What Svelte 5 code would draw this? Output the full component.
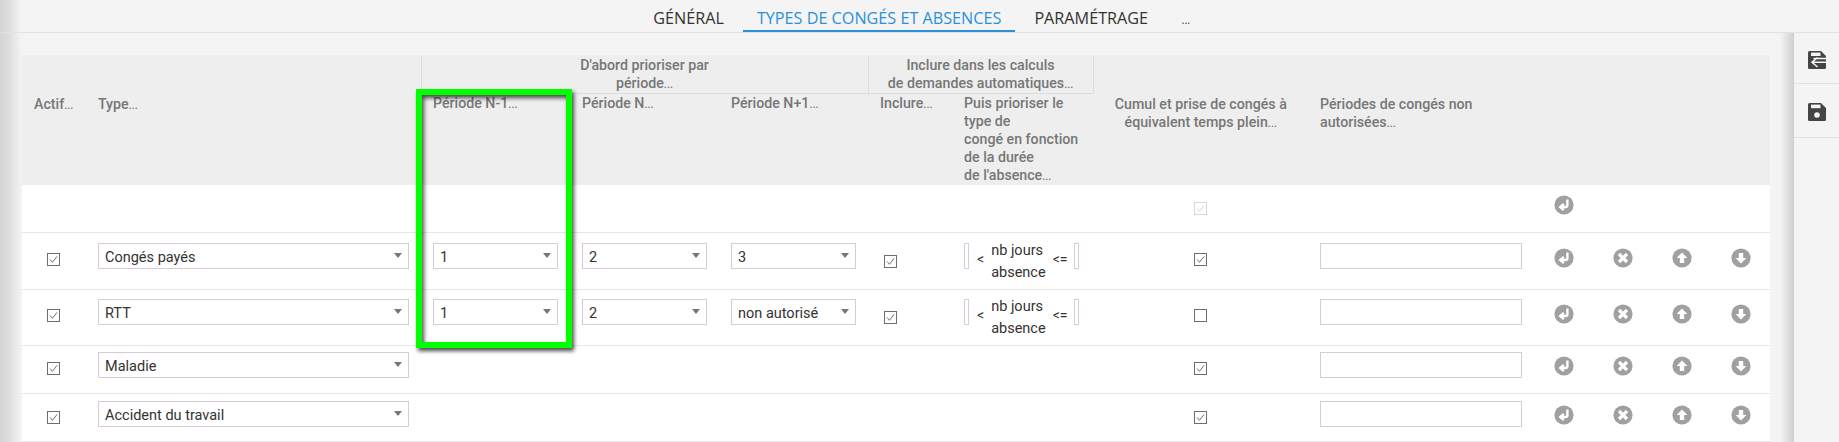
<script>
  const tabs = ["GÉNÉRAL", "TYPES DE CONGÉS ET ABSENCES", "PARAMÉTRAGE"];
  const rows = [
    { type: "Congés payés", periods: ["1", "2", "3"], cumul: true, cls: "r1" },
    { type: "RTT", periods: ["1", "2", "non autorisé"], cumul: false, cls: "r2" },
    { type: "Maladie", cumul: true, cls: "r3" },
    { type: "Accident du travail", cumul: true, cls: "r4" },
  ];
</script>

{#snippet check(on, cls = "")}
  <span class="check {cls}">
    {#if on}
      <svg viewBox="0 0 13 13" width="11" height="11"><path d="M2.5 6.5 L5.2 9.8 L10.8 2.8" fill="none" stroke="currentColor" stroke-width="1" /></svg>
    {/if}
  </span>
{/snippet}

{#snippet select(value, cls = "")}
  <div class="select {cls}"><span>{value}</span><i></i></div>
{/snippet}

{#snippet dots()}<small class="dots">...</small>{/snippet}

{#snippet enterIcon()}
  <svg class="round" viewBox="0 0 20 20">
    <circle cx="10" cy="10" r="9.6" />
    <path d="M13.4 4.5 V10.2 Q13.4 12 11.6 12 H7.6 M9.8 8.8 L6.2 12 L9.8 15.2" fill="none" stroke="#fff" stroke-width="2.4" />
  </svg>
{/snippet}

{#snippet crossIcon()}
  <svg class="round" viewBox="0 0 20 20">
    <circle cx="10" cy="10" r="9.6" />
    <path d="M6 6 L14 14 M14 6 L6 14" fill="none" stroke="#fff" stroke-width="3.2" />
  </svg>
{/snippet}

{#snippet upIcon()}
  <svg class="round" viewBox="0 0 20 20">
    <circle cx="10" cy="10" r="9.6" />
    <path d="M10 4.4 L15.4 10 H12.2 V15 H7.8 V10 H4.6 Z" fill="#fff" />
  </svg>
{/snippet}

{#snippet downIcon()}
  <svg class="round" viewBox="0 0 20 20">
    <circle cx="10" cy="10" r="9.6" />
    <path d="M10 15.6 L15.4 10 H12.2 V5 H7.8 V10 H4.6 Z" fill="#fff" />
  </svg>
{/snippet}

<div class="page">
  <nav class="tabs">
    {#each tabs as tab, i}
      <button type="button" class="tab" class:active={i === 1}>{tab}</button>
    {/each}
    <button type="button" class="tab more">...</button>
  </nav>

  <div class="body">
    <main class="content">
      <table>
        <colgroup>
          <col class="c-actif" /><col class="c-type" /><col class="c-per" /><col class="c-per" /><col class="c-per" />
          <col class="c-incl" /><col class="c-puis" /><col class="c-cumul" /><col class="c-nonaut" />
          <col class="c-act" /><col class="c-act" /><col class="c-act" /><col class="c-act" />
        </colgroup>
        <thead>
          <tr class="h1">
            <th rowspan="2" class="mid">Actif{@render dots()}</th>
            <th rowspan="2" class="mid">Type{@render dots()}</th>
            <th colspan="3" class="group">D'abord prioriser par<br />période{@render dots()}</th>
            <th colspan="2" class="group right">Inclure dans les calculs<br />de demandes automatiques{@render dots()}</th>
            <th rowspan="2" class="mid center">Cumul et prise de congés à<br />équivalent temps plein{@render dots()}</th>
            <th rowspan="2" class="mid">Périodes de congés non<br />autorisées{@render dots()}</th>
            <th rowspan="2" colspan="4"></th>
          </tr>
          <tr class="h2">
            <th>Période N-1{@render dots()}</th>
            <th>Période N{@render dots()}</th>
            <th>Période N+1{@render dots()}</th>
            <th>Inclure{@render dots()}</th>
            <th class="tight">Puis prioriser le<br />type de<br />congé en fonction<br />de la durée<br />de l'absence{@render dots()}</th>
          </tr>
        </thead>
        <tbody>
          <tr class="r0">
            <td colspan="7"></td>
            <td class="center">{@render check(true, "disabled")}</td>
            <td></td>
            <td class="action">{@render enterIcon()}</td>
            <td colspan="3"></td>
          </tr>
          {#each rows as row}
            <tr class={row.cls}>
              <td class="box first">{@render check(true)}</td>
              <td>{@render select(row.type)}</td>
              {#if row.periods}
                {#each row.periods as p}
                  <td>{@render select(p)}</td>
                {/each}
                <td class="box incl">{@render check(true)}</td>
                <td>
                  <div class="range">
                    <span class="mini"></span>
                    <span class="lt">&lt;</span>
                    <span class="label">nb jours<br />absence</span>
                    <span class="lte">&lt;=</span>
                    <span class="mini"></span>
                  </div>
                </td>
              {:else}
                <td colspan="5"></td>
              {/if}
              <td class="center box">{@render check(row.cumul)}</td>
              <td><div class="input"></div></td>
              <td class="action">{@render enterIcon()}</td>
              <td class="action">{@render crossIcon()}</td>
              <td class="action">{@render upIcon()}</td>
              <td class="action">{@render downIcon()}</td>
            </tr>
          {/each}
        </tbody>
      </table>
    </main>

    <aside class="side">
      <button type="button" class="side-btn first" aria-label="Enregistrer et revenir">
        <svg viewBox="0 0 18 18" width="18" height="18">
          <path d="M1.5 0 H13 L18 5 V16.5 Q18 18 16.5 18 H1.5 Q0 18 0 16.5 V1.5 Q0 0 1.5 0 Z" fill="#444" />
          <rect x="3" y="1.6" width="9.5" height="3.4" fill="#f4f4f4" />
          <path d="M9.5 6.5 L4 11.2 L9.5 16 M4.5 11.2 H18 M5.5 7.6 H18" fill="none" stroke="#f4f4f4" stroke-width="1.5" />
        </svg>
      </button>
      <button type="button" class="side-btn" aria-label="Enregistrer">
        <svg viewBox="0 0 18 18" width="18" height="18">
          <path d="M1.5 0 H13 L18 5 V16.5 Q18 18 16.5 18 H1.5 Q0 18 0 16.5 V1.5 Q0 0 1.5 0 Z" fill="#444" />
          <rect x="3" y="1.6" width="9.5" height="3.6" fill="#f4f4f4" />
          <circle cx="9" cy="12" r="2.8" fill="#f4f4f4" />
        </svg>
      </button>
    </aside>
  </div>

  <div class="highlight"></div>
</div>

<style>
  :global(body) {
    margin: 0;
    background: #f4f4f4;
  }

  .page {
    position: relative;
    height: 442px;
    overflow: hidden;
    background: linear-gradient(90deg, #d4d4d4 0, #dcdcdc 8px, #f4f4f4 22px);
    font-family: Roboto, "Liberation Sans", sans-serif;
    color: #333;
  }

  /* Tabs */
  .tabs {
    height: 33px;
    box-sizing: border-box;
    display: flex;
    justify-content: center;
    gap: 6px;
    padding-left: 10px;
    border-bottom: 1px solid #e2e2e2;
  }

  .tab {
    height: 32px;
    padding: 6px 13.5px 0;
    background: none;
    border: 0;
    border-bottom: 2px solid transparent;
    font-family: "Open Sans", sans-serif;
    font-size: 16.2px;
    color: #333;
    white-space: nowrap;
  }

  .tab.active {
    color: #2b90dc;
    border-bottom-color: #2b90dc;
  }

  .tab.more {
    font-size: 11px;
    padding-top: 9px;
    padding-left: 14px;
    padding-right: 19px;
  }

  .body {
    display: flex;
    height: 409px;
    padding-left: 22px;
  }

  .content {
    width: 1748px;
    padding-top: 22px;
    flex: none;
  }

  /* Table */
  table {
    width: 1748px;
    table-layout: fixed;
    border-collapse: collapse;
    background: #fff;
  }

  .c-actif { width: 64px; }
  .c-type { width: 335px; }
  .c-per { width: 149px; }
  .c-incl { width: 84px; }
  .c-puis { width: 141px; }
  .c-cumul { width: 215px; }
  .c-nonaut { width: 226px; }
  .c-act { width: 59px; }

  thead {
    background: #eee;
  }

  th {
    padding: 0 12px;
    font-size: 14.2px;
    font-weight: 500;
    line-height: 18.2px;
    color: #777;
    text-align: left;
    vertical-align: top;
    white-space: nowrap;
  }

  .dots {
    font-size: 11px;
    line-height: 0;
  }

  th.mid {
    padding-top: 40px;
  }

  th.center {
    text-align: center;
    padding-left: 0;
    padding-right: 0;
  }

  .h1 {
    height: 38px;
  }

  .h2 {
    height: 91px;
  }

  .h2 th {
    padding-top: 0;
    border-top: 1px solid #dcdcdc;
  }

  .h2 .tight {
    padding-right: 0;
  }

  .group {
    text-align: center;
    border-left: 1px solid #dcdcdc;
    padding-top: 1px;
  }

  .group.right {
    border-right: 1px solid #dcdcdc;
  }

  td {
    padding: 0 12px;
    vertical-align: top;
    font-size: 14px;
  }

  tbody tr {
    border-bottom: 1px solid #e6e6e6;
  }

  .r0 { height: 48px; }
  .r1 { height: 57px; }
  .r2 { height: 56px; }
  .r3 { height: 48px; }
  .r4 { height: 48px; }

  .r1 td { padding-top: 10px; }
  .r2 td { padding-top: 9px; }
  .r3 td { padding-top: 6px; }
  .r4 td { padding-top: 7px; }

  .r0 td { padding-top: 16px; }

  .r1 .box { padding-top: 20px; }
  .r2 .box { padding-top: 19px; }
  .r3 .box { padding-top: 16px; }
  .r4 .box { padding-top: 17px; }

  .r1 .incl { padding-top: 22px; }
  .r2 .incl { padding-top: 21px; }

  .r0 .action { padding-top: 10px; }
  .r1 .action { padding-top: 15px; }
  .r2 .action { padding-top: 14px; }
  .r3 .action { padding-top: 10px; }
  .r4 .action { padding-top: 11px; }

  .center {
    text-align: center;
  }

  .box {
    line-height: 0;
  }

  .box.first {
    padding-left: 25px;
  }

  .incl {
    padding-left: 16px;
  }

  .check {
    display: inline-flex;
    align-items: center;
    justify-content: center;
    box-sizing: border-box;
    width: 13px;
    height: 13px;
    border: 1px solid #6e6e6e;
    background: #fff;
    color: #555;
  }

  .check.disabled {
    border-color: #d8d8d8;
    color: #d0d0d0;
  }

  .select {
    position: relative;
    height: 26px;
    box-sizing: border-box;
    padding-left: 6px;
    border: 1px solid #d9c9dd;
    background: #fff;
    line-height: 28px;
    font-size: 14.5px;
    color: #333;
  }

  .select i {
    position: absolute;
    right: 6px;
    top: 9px;
    border-left: 4px solid transparent;
    border-right: 4px solid transparent;
    border-top: 5px solid #777;
  }

  .input {
    height: 26px;
    box-sizing: border-box;
    border: 1px solid #d9c9dd;
    background: #fff;
  }

  .range {
    display: flex;
    align-items: flex-start;
    height: 44px;
  }

  .mini {
    flex: none;
    width: 5px;
    height: 26px;
    box-sizing: border-box;
    border: 1px solid #d9c9dd;
  }

  .lt {
    margin: 8px 0 0 8px;
    font-size: 14px;
  }

  .label {
    margin: -3px 0 0 7px;
    font-size: 14.5px;
    line-height: 22px;
    white-space: nowrap;
  }

  .lte {
    margin: 8px 7px 0 7px;
    font-size: 14px;
    white-space: nowrap;
  }

  .action {
    padding-left: 0;
    padding-right: 0;
    text-align: center;
    line-height: 0;
  }

  .round {
    width: 20px;
    height: 20px;
    fill: #a0a0a0;
  }

  /* Right action bar */
  .side {
    flex: 1;
    display: flex;
    flex-direction: column;
    background: linear-gradient(90deg, #f4f4f4 0, #f4f4f4 10px, #cfcfcf 24px, #f4f4f4 24px);
  }

  .side-btn {
    height: 54px;
    margin-left: 24px;
    padding: 3px 0 0;
    background: #f4f4f4;
    border: 0;
    border-bottom: 1px solid #e2e2e2;
    line-height: 0;
    flex: none;
  }

  .side-btn.first {
    height: 51px;
  }

  /* Green review marker drawn over the table */
  .highlight {
    position: absolute;
    left: 416px;
    top: 89px;
    width: 156px;
    height: 259px;
    box-sizing: border-box;
    border: 6px solid #00ff00;
    box-shadow: 2px 3px 4px rgba(0, 0, 0, 0.7), inset 2px 3px 4px rgba(0, 0, 0, 0.7);
    pointer-events: none;
  }
</style>
